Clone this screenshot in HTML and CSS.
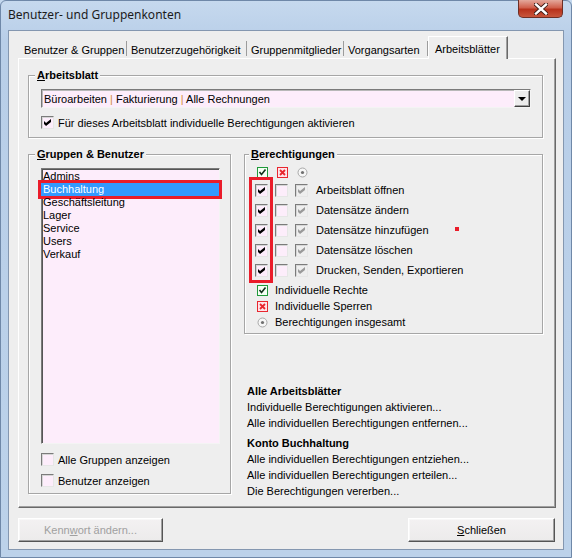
FILE: index.html
```html
<!DOCTYPE html>
<html lang="de">
<head>
    <meta charset="UTF-8">
    <title>Benutzer- und Gruppenkonten</title>
    <link rel="stylesheet" href="styles.css">
</head>
<body>
    <div class="window">
        <!-- Titelleiste -->
        <div class="titlebar">
            <span class="title">Benutzer- und Gruppenkonten</span>
            <span class="close">
                <svg width="14" height="12" viewBox="0 0 14 12">
                    <path d="M2 1.5 L12 10.5 M12 1.5 L2 10.5" stroke="#3a1a14" stroke-width="4.2" stroke-linecap="square"/>
                    <path d="M2 1.5 L12 10.5 M12 1.5 L2 10.5" stroke="#ffffff" stroke-width="2.4" stroke-linecap="square"/>
                </svg>
            </span>
        </div>

        <div class="client">
            <!-- Reiter -->
            <div class="tabs">
                <span class="tab t1">Benutzer &amp; Gruppen</span>
                <span class="tab t2">Benutzerzugehörigkeit</span>
                <span class="tab t3">Gruppenmitglieder</span>
                <span class="tab t4">Vorgangsarten</span>
                <span class="tab t5 active">Arbeitsblätter</span>
            </div>

            <div class="panel">
                <!-- Arbeitsblatt -->
                <fieldset class="group sheet">
                    <legend><u>A</u>rbeitsblatt</legend>
                    <div class="combo">
                        <span class="combo-text">Büroarbeiten <span class="sep">|</span> Fakturierung <span class="sep">|</span> Alle Rechnungen</span>
                        <span class="combo-btn"><span class="arrow"></span></span>
                    </div>
                    <div class="check-row">
                        <span class="box checked"></span>
                        <span>Für dieses Arbeitsblatt individuelle Berechtigungen aktivieren</span>
                    </div>
                </fieldset>

                <div class="columns">
                    <!-- Gruppen & Benutzer -->
                    <fieldset class="group users">
                        <legend><u>G</u>ruppen &amp; Benutzer</legend>
                        <div class="listbox">
                            <div class="item">Admins</div>
                            <div class="item selected">Buchhaltung</div>
                            <div class="item">Geschäftsleitung</div>
                            <div class="item">Lager</div>
                            <div class="item">Service</div>
                            <div class="item">Users</div>
                            <div class="item">Verkauf</div>
                        </div>
                        <div class="check-row first">
                            <span class="box"></span>
                            <span>Alle Gruppen anzeigen</span>
                        </div>
                        <div class="check-row second">
                            <span class="box"></span>
                            <span>Benutzer anzeigen</span>
                        </div>
                    </fieldset>

                    <div class="right">
                        <!-- Berechtigungen -->
                        <fieldset class="group perms">
                            <legend><u>B</u>erechtigungen</legend>
                            <div class="perm-head">
                                <span class="cell">
                                    <svg width="11" height="11" viewBox="0 0 11 11">
                                        <rect x="0.5" y="0.5" width="10" height="10" fill="#f4fff4" stroke="#1f9a3a"/>
                                        <path d="M2.5 5 L4.5 7.5 L8.5 2.5" stroke="#10301a" stroke-width="1.6" fill="none"/>
                                    </svg>
                                </span>
                                <span class="cell">
                                    <svg width="11" height="11" viewBox="0 0 11 11">
                                        <rect x="0.5" y="0.5" width="10" height="10" fill="#ffe4ea" stroke="#e8262e"/>
                                        <path d="M3 3 L8 8 M8 3 L3 8" stroke="#e8262e" stroke-width="1.8"/>
                                    </svg>
                                </span>
                                <span class="cell">
                                    <svg width="11" height="11" viewBox="0 0 11 11">
                                        <circle cx="5.5" cy="5.5" r="4.5" fill="#f6f6f6" stroke="#a8a8a8"/>
                                        <circle cx="5.5" cy="5.5" r="1.6" fill="#707070"/>
                                    </svg>
                                </span>
                            </div>
                            <div class="perm-grid">
                                <div class="perm-col marked">
                                    <div class="perm-row"><span class="box checked"></span></div>
                                    <div class="perm-row"><span class="box checked"></span></div>
                                    <div class="perm-row"><span class="box checked"></span></div>
                                    <div class="perm-row"><span class="box checked"></span></div>
                                    <div class="perm-row"><span class="box checked"></span></div>
                                </div>
                                <div class="perm-col">
                                    <div class="perm-row"><span class="box"></span></div>
                                    <div class="perm-row"><span class="box"></span></div>
                                    <div class="perm-row"><span class="box"></span></div>
                                    <div class="perm-row"><span class="box"></span></div>
                                    <div class="perm-row"><span class="box"></span></div>
                                </div>
                                <div class="perm-col total">
                                    <div class="perm-row"><span class="box grey"></span></div>
                                    <div class="perm-row"><span class="box grey"></span></div>
                                    <div class="perm-row"><span class="box grey"></span></div>
                                    <div class="perm-row"><span class="box grey"></span></div>
                                    <div class="perm-row"><span class="box grey"></span></div>
                                </div>
                                <div class="perm-labels">
                                    <div class="perm-row">Arbeitsblatt öffnen</div>
                                    <div class="perm-row">Datensätze ändern</div>
                                    <div class="perm-row dot-row">Datensätze hinzufügen<span class="dot"></span></div>
                                    <div class="perm-row">Datensätze löschen</div>
                                    <div class="perm-row">Drucken, Senden, Exportieren</div>
                                </div>
                            </div>
                            <div class="legend-list">
                                <div class="legend-row">
                                    <span class="cell">
                                        <svg width="11" height="11" viewBox="0 0 11 11">
                                            <rect x="0.5" y="0.5" width="10" height="10" fill="#f4fff4" stroke="#1f9a3a"/>
                                            <path d="M2.5 5 L4.5 7.5 L8.5 2.5" stroke="#10301a" stroke-width="1.6" fill="none"/>
                                        </svg>
                                    </span>
                                    Individuelle Rechte
                                </div>
                                <div class="legend-row">
                                    <span class="cell">
                                        <svg width="11" height="11" viewBox="0 0 11 11">
                                            <rect x="0.5" y="0.5" width="10" height="10" fill="#ffe4ea" stroke="#e8262e"/>
                                            <path d="M3 3 L8 8 M8 3 L3 8" stroke="#e8262e" stroke-width="1.8"/>
                                        </svg>
                                    </span>
                                    Individuelle Sperren
                                </div>
                                <div class="legend-row">
                                    <span class="cell">
                                        <svg width="11" height="11" viewBox="0 0 11 11">
                                            <circle cx="5.5" cy="5.5" r="4.5" fill="#f6f6f6" stroke="#a8a8a8"/>
                                            <circle cx="5.5" cy="5.5" r="1.6" fill="#707070"/>
                                        </svg>
                                    </span>
                                    Berechtigungen insgesamt
                                </div>
                            </div>
                        </fieldset>

                        <!-- Aktionen -->
                        <div class="actions">
                            <div class="action-head">Alle Arbeitsblätter</div>
                            <div class="action">Individuelle Berechtigungen aktivieren...</div>
                            <div class="action">Alle individuellen Berechtigungen entfernen...</div>
                            <div class="action-head second">Konto Buchhaltung</div>
                            <div class="action">Alle individuellen Berechtigungen entziehen...</div>
                            <div class="action">Alle individuellen Berechtigungen erteilen...</div>
                            <div class="action">Die Berechtigungen vererben...</div>
                        </div>
                    </div>
                </div>
            </div>

            <!-- Schaltflächen -->
            <div class="buttons">
                <button class="btn disabled">Kenn<u>w</u>ort ändern...</button>
                <button class="btn close-btn"><u>S</u>chließen</button>
            </div>
        </div>
    </div>
</body>
</html>
```

FILE: styles.css
```css
/* Allgemein */
body {
    margin: 0;
    font-family: "Liberation Sans", Arial, sans-serif;
    font-size: 11px;
    color: #000;
    background: #c4d8ee;
}

/* Fensterrahmen */
.window {
    width: 572px;
    height: 558px;
    box-sizing: border-box;
    display: flex;
    flex-direction: column;
    padding: 0 7px 7px 7px;
    background: linear-gradient(#c6d9ee, #b8cee8 40px, #bcd2ea);
    border: 1px solid #6f88a8;
    border-radius: 6px 6px 0 0;
}

.titlebar {
    height: 29px;
    display: flex;
    justify-content: space-between;
    align-items: flex-start;
}

.title {
    font-family: "Noto Sans", "Open Sans", sans-serif;
    font-size: 12px;
    line-height: 16px;
    padding-top: 6px;
    color: #1b1b1b;
}

.close {
    width: 45px;
    height: 18px;
    margin: -1px 1px 0 0;
    box-sizing: border-box;
    border: 1px solid #6e2f25;
    border-top: none;
    border-radius: 0 0 5px 5px;
    background: linear-gradient(#e4a89c, #d0604c 45%, #b8321c 55%, #c8563c);
    display: flex;
    align-items: center;
    justify-content: center;
}

/* Client-Bereich */
.client {
    flex: 1;
    display: flex;
    flex-direction: column;
    background: #eeeeee;
    border: 1px solid #8497b0;
    padding: 5px 7px 0 9px;
}

/* Reiter */
.tabs {
    display: flex;
    align-items: flex-end;
    height: 22px;
    padding-left: 2px;
}

.tab {
    box-sizing: border-box;
    height: 20px;
    line-height: 16px;
    padding: 4px 0 0 4px;
    white-space: nowrap;
    background: linear-gradient(#9c9c9c, #9c9c9c) right 3px / 1px 15px no-repeat;
}

.t1 { width: 107px; }
.t2 { width: 120px; }
.t3 { width: 97px; }
.t4 { width: 84px; }
.t5 { width: 80px; }

.tab.active {
    height: 23px;
    margin-bottom: -1px;
    padding-left: 6px;
    background: #eeeeee;
    border-top: 1px solid #fff;
    border-left: 1px solid #fff;
    border-right: 1px solid #696969;
    box-shadow: inset -1px 0 #a0a0a0;
    position: relative;
}

.panel {
    height: 450px;
    box-sizing: border-box;
    border: 1px solid;
    border-color: #fff #696969 #696969 #fff;
    box-shadow: inset -1px -1px #a0a0a0;
    padding: 9px 12px 0 9px;
}

/* Gruppenrahmen */
.group {
    margin: 0;
    padding: 0 11px 0 12px;
    border: 1px solid #a6a6a6;
    box-shadow: inset 1px 1px #fff, 1px 1px #fff;
    min-width: 0;
}

.group legend {
    font-weight: bold;
    line-height: 14px;
    padding: 0 2px;
    margin-left: -6px;
    background: #eeeeee;
}

/* Kombinationsfeld */
.combo {
    margin-top: 7px;
    height: 19px;
    box-sizing: border-box;
    display: flex;
    align-items: center;
    background: #fdedfb;
    border: 1px solid;
    border-color: #7a7a7a #f4f4f4 #f4f4f4 #7a7a7a;
    box-shadow: inset 1px 1px #b8b8b8;
}

.combo-text {
    flex: 1;
    padding-left: 2px;
}

.sep {
    color: #d38a3c;
}

.combo-btn {
    width: 16px;
    height: 17px;
    box-sizing: border-box;
    background: #ededed;
    border: 1px solid;
    border-color: #fff #404040 #404040 #fff;
    box-shadow: inset -1px -1px #a0a0a0;
    display: flex;
    align-items: center;
    justify-content: center;
}

.arrow {
    width: 0;
    height: 0;
    border-left: 4px solid transparent;
    border-right: 4px solid transparent;
    border-top: 4px solid #000;
}

/* Kontrollkästchen */
.check-row {
    display: flex;
    align-items: center;
    gap: 4px;
    height: 13px;
}

.sheet .check-row {
    margin: 8px 0 8px 0;
}

.box {
    width: 13px;
    height: 13px;
    box-sizing: border-box;
    display: inline-block;
    flex: none;
    position: relative;
    background: #fdedfb;
    border: 1px solid;
    border-color: #7b7b7b #e6e6e6 #e6e6e6 #7b7b7b;
    box-shadow: inset 1px 1px #d6d6d6;
}

.box.checked::after,
.box.grey::after {
    content: "";
    position: absolute;
    left: 2px;
    top: 2px;
    width: 7px;
    height: 7px;
    background: #000;
    clip-path: polygon(0 29%, 29% 57%, 100% 0, 100% 43%, 29% 100%, 0 71%);
}

.box.grey {
    background: #eeeeee;
}

.box.grey::after {
    background: #9a9a9a;
}

/* Spalten */
.columns {
    display: flex;
    gap: 13px;
    margin-top: 9px;
    align-items: flex-start;
}

.users {
    width: 203px;
    box-sizing: border-box;
    padding: 0 10px 6px 12px;
}

.listbox {
    margin-top: 7px;
    height: 276px;
    box-sizing: border-box;
    padding-top: 1px;
    background: #fdedfb;
    border: 1px solid;
    border-color: #7a7a7a #f4f4f4 #f4f4f4 #7a7a7a;
    box-shadow: inset 1px 1px #555;
}

.item {
    line-height: 13px;
    height: 13px;
    padding-left: 1px;
}

.item.selected {
    background: #3399ff;
    color: #fff;
    margin-left: -1px;
    padding-left: 2px;
    box-shadow: 0 0 0 3px #ea1c2a;
}

.users .check-row.first {
    margin-top: 9px;
}

.users .check-row.second {
    margin-top: 8px;
}

.right {
    flex: 1;
}

/* Berechtigungen */
.perms {
    padding: 0 10px 3px 10px;
}

.perm-head {
    display: flex;
    align-items: center;
    height: 15px;
    margin-top: 4px;
}

.cell {
    width: 20px;
    box-sizing: border-box;
    padding-left: 2px;
    display: flex;
    align-items: center;
}

.perm-grid {
    display: flex;
    align-items: flex-start;
}

.perm-col {
    width: 20px;
}

.perm-col.marked {
    width: auto;
    border: 3px solid #ea1c2a;
    margin: -3px 2px -3px -6px;
    padding: 0 2px 0 3px;
}

.perm-col.total {
    width: 21px;
}

.perm-row {
    height: 20px;
    box-sizing: border-box;
    padding-top: 4px;
}

.perm-labels .perm-row {
    padding-top: 0;
    line-height: 20px;
    white-space: nowrap;
}

.dot-row {
    position: relative;
}

.dot {
    position: absolute;
    left: 139px;
    top: 7px;
    width: 4px;
    height: 4px;
    background: #ea1c2a;
}

.legend-list {
    margin-top: 2px;
}

.legend-row {
    display: flex;
    align-items: center;
    height: 16px;
}

/* Aktionen */
.actions {
    margin-top: 49px;
    padding-left: 3px;
}

.action-head,
.action {
    line-height: 16px;
    white-space: nowrap;
}

.action-head {
    font-weight: bold;
}

.action-head.second {
    margin-top: 4px;
}

/* Schaltflächen */
.buttons {
    display: flex;
    justify-content: space-between;
    margin-top: 10px;
}

.btn {
    height: 24px;
    font-family: inherit;
    font-size: 11px;
    color: #000;
    background: linear-gradient(#f3f1f2, #ecebeb);
    border: 1px solid;
    border-color: #fff #555 #555 #fff;
    box-shadow: inset -1px -1px #a0a0a0, inset 1px 1px #f8f8f8;
    padding: 0;
}

.btn.disabled {
    width: 145px;
    color: #a0a0a0;
}

.btn.close-btn {
    width: 147px;
    margin-right: 1px;
}
```
